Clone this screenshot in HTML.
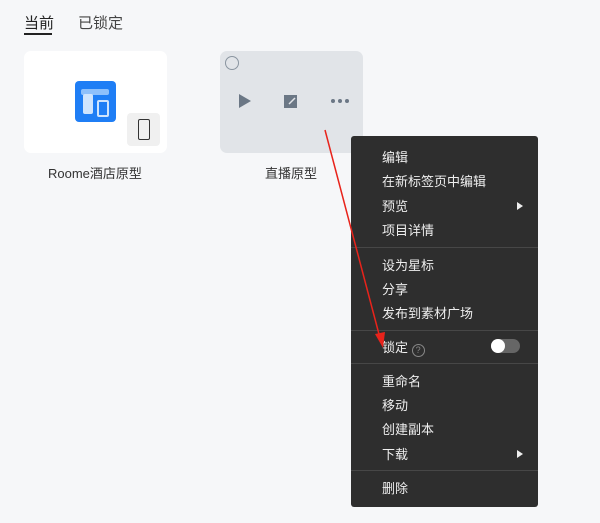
<!DOCTYPE html>
<html><head><meta charset="utf-8"><style>
body{margin:0;width:600px;height:523px;background:#f6f7f9;font-family:"Liberation Sans","Noto Sans CJK SC",sans-serif;position:relative;overflow:hidden}
.a{position:absolute}
.menu{left:351px;top:136px;width:187px;height:371px;background:#2e2e2e;border-radius:3px}
.it{position:absolute;left:31px;color:#eee;font-size:13px;line-height:16px}
.dv{position:absolute;left:0;width:187px;height:1px;background:#474747}
.tri{position:absolute;left:166px;width:0;height:0;border-left:6px solid #eee;border-top:4px solid transparent;border-bottom:4px solid transparent}
</style></head><body>
<div class="a" style="left:24px;top:12px;font-size:15px;color:#222">当前</div>
<div class="a" style="left:24px;top:33px;width:28px;height:2px;background:#222"></div>
<div class="a" style="left:78px;top:12px;font-size:15px;color:#444">已锁定</div>

<div class="a" style="left:24px;top:51px;width:143px;height:102px;background:#fff;border-radius:7px"></div>
<div class="a" style="left:75px;top:81px;width:41px;height:41px;background:#1f7ef5;border-radius:4px"></div>
<div class="a" style="left:81px;top:89px;width:28px;height:6px;background:#8ec0fb;border-radius:2px"></div>
<div class="a" style="left:83px;top:94px;width:10px;height:20px;background:#cfe4fd;border-radius:2px"></div>
<div class="a" style="left:97px;top:100px;width:8px;height:13px;border:2px solid #cfe4fd;border-radius:2px"></div>
<div class="a" style="left:127px;top:113px;width:33px;height:33px;background:#f0f0f0;border-radius:4px"></div>
<div class="a" style="left:138px;top:119px;width:10px;height:19px;border:1.5px solid #333;border-radius:2px"></div>
<div class="a" style="left:48px;top:163px;font-size:13px;color:#333">Roome酒店原型</div>

<div class="a" style="left:220px;top:51px;width:143px;height:102px;background:#e1e4e8;border-radius:7px"></div>
<div class="a" style="left:225px;top:56px;width:12px;height:12px;border:1px solid #8a95a0;border-radius:50%"></div>
<div class="a" style="left:239px;top:94px;border-left:12px solid #6b7785;border-top:7px solid transparent;border-bottom:7px solid transparent"></div>
<svg class="a" style="left:284px;top:94px" width="15" height="15"><rect x="0" y="1" width="13" height="13" fill="#6b7785"/><line x1="5" y1="10" x2="11" y2="4" stroke="#e1e4e8" stroke-width="1.5"/></svg>
<svg class="a" style="left:330px;top:98px" width="20" height="6"><circle cx="3" cy="3" r="2" fill="#6b7785"/><circle cx="10" cy="3" r="2" fill="#6b7785"/><circle cx="17" cy="3" r="2" fill="#6b7785"/></svg>
<div class="a" style="left:265px;top:163px;font-size:13px;color:#333">直播原型</div>

<div class="a menu">
<div class="it" style="top:14px">编辑</div>
<div class="it" style="top:38px">在新标签页中编辑</div>
<div class="it" style="top:63px">预览</div><div class="tri" style="top:66px"></div>
<div class="it" style="top:87px">项目详情</div>
<div class="dv" style="top:111px"></div>
<div class="it" style="top:122px">设为星标</div>
<div class="it" style="top:146px">分享</div>
<div class="it" style="top:170px">发布到素材广场</div>
<div class="dv" style="top:194px"></div>
<div class="it" style="top:204px">锁定 <span style="display:inline-block;width:11px;height:11px;border:1px solid #888;border-radius:50%;font-size:9px;line-height:11px;text-align:center;color:#888;vertical-align:-1px">?</span></div>
<div style="position:absolute;left:140px;top:203px;width:29px;height:14px;background:#666;border-radius:7px"></div>
<div style="position:absolute;left:140px;top:203px;width:14px;height:14px;background:#fff;border-radius:50%"></div>
<div class="dv" style="top:227px"></div>
<div class="it" style="top:238px">重命名</div>
<div class="it" style="top:262px">移动</div>
<div class="it" style="top:286px">创建副本</div>
<div class="it" style="top:311px">下载</div><div class="tri" style="top:314px"></div>
<div class="dv" style="top:334px"></div>
<div class="it" style="top:345px">删除</div>
</div>
<svg class="a" style="left:0;top:0" width="600" height="523"><line x1="325" y1="130" x2="380" y2="338" stroke="#e8231b" stroke-width="1.5"/><polygon points="383,348 375,334 385,332" fill="#e8231b"/></svg>
</body></html>
